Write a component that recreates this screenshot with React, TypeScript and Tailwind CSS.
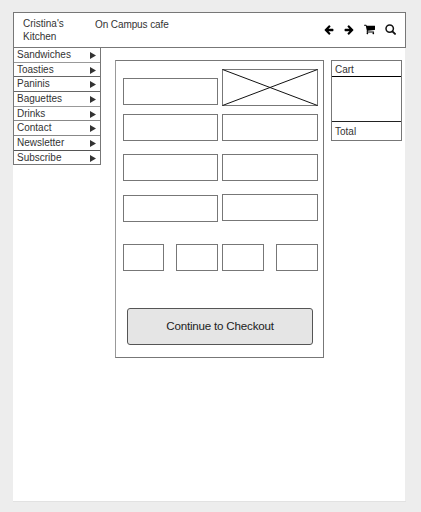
const menu = [
  { label: "Sandwiches", size: "h-[15px] border-[#999]" },
  { label: "Toasties", size: "h-[14px] border-[#666]" },
  { label: "Paninis", size: "h-[15px] border-[#666]" },
  { label: "Baguettes", size: "h-[15px] border-[#999]" },
  { label: "Drinks", size: "h-[14px] border-[#888]" },
  { label: "Contact", size: "h-[15px] border-[#888]" },
  { label: "Newsletter", size: "h-[15px] border-[#555]" },
  { label: "Subscribe", size: "h-[14px] border-[#777]" },
];

function Box({ className }: { className: string }) {
  return <div className={`border border-[#777] ${className}`} />;
}

function ArrowIcon({ className }: { className: string }) {
  return (
    <svg className={`h-[10px] w-[10px] ${className}`} viewBox="0 -128 1600 1664" fill="#000">
      <path d="M1536 640v128q0 53-32.5 90.5t-84.5 37.5h-704l293 294q38 36 38 90t-38 90l-75 76q-37 37-90 37-52 0-91-37l-651-652q-37-37-37-90 0-52 37-91l651-650q38-38 91-38 52 0 90 38l75 74q38 38 38 91t-38 91l-293 293h704q52 0 84.5 37.5t32.5 90.5z" />
    </svg>
  );
}

function CartIcon() {
  return (
    <svg className="mr-[10px] h-[11px] w-[11px]" viewBox="0 128 1664 1664" fill="#000">
      <path d="M640 1536q0 52-38 90t-90 38-90-38-38-90 38-90 90-38 90 38 38 90zm896 0q0 52-38 90t-90 38-90-38-38-90 38-90 90-38 90 38 38 90zm128-1088v512q0 24-16.5 42.5t-40.5 21.5l-1044 122q13 60 13 70 0 16-24 64h920q26 0 45 19t19 45-19 45-45 19h-1024q-26 0-45-19t-19-45q0-11 8-31.5t16-36 21.5-40 15.5-29.5l-177-823h-204q-26 0-45-19t-19-45 19-45 45-19h256q16 0 28.5 6.5t19.5 15.5 13 24.5 8 26 5.5 29.5 4.5 26h1201q26 0 45 19t19 45z" />
    </svg>
  );
}

function SearchIcon() {
  return (
    <svg className="h-[11px] w-[11px]" viewBox="0 0 11 11" fill="none" stroke="#111">
      <circle cx="4.7" cy="4.6" r="3.7" strokeWidth="1.5" />
      <path d="M7.4 7.3L10 9.9" strokeWidth="1.9" strokeLinecap="round" />
    </svg>
  );
}

export default function App() {
  return (
    <div className="h-[512px] w-[421px] overflow-hidden bg-[#ededed] pt-3 pl-[13px] font-['Liberation_Sans',Arial,sans-serif] text-[10px] text-[#333]">
      <div className="flex h-[490px] w-[393px] flex-col border-b border-[#e2e2e2] bg-white">
        <header className="flex h-9 shrink-0 border border-[#777]">
          <div className="mt-[4px] ml-[9px] w-[72px] leading-[13px]">
            Cristina&apos;s
            <br />
            Kitchen
          </div>
          <div className="mt-[5px] tracking-[-0.1px] leading-[13px]">On Campus cafe</div>
          <div className="mt-[11px] mr-[9px] ml-auto flex h-[11px] items-center">
            <ArrowIcon className="mr-[10px]" />
            <ArrowIcon className="mr-[10px] -scale-x-100" />
            <CartIcon />
            <SearchIcon />
          </div>
        </header>
        <div className="flex grow items-start border-r border-[#ededed]">
          <nav className="w-[88px] border-x border-[#777]">
            {menu.map((item) => (
              <div key={item.label} className={`flex items-center border-b pr-1 pl-[3px] leading-[14px] ${item.size}`}>
                <span>{item.label}</span>
                <svg className="mt-px ml-auto h-[7px] w-[6px]" viewBox="0 0 6 7">
                  <path d="M0 0L6 3.5L0 7Z" fill="#333" />
                </svg>
              </div>
            ))}
          </nav>
          <main className="mt-3 ml-[14px] h-[298px] w-[209px] border border-[#777] border-l-[#999] pl-[7px]">
            <div className="flex gap-1">
              <div className="flex w-[95px] flex-col">
                <Box className="mt-[17px] h-[27px]" />
                <Box className="mt-[9px] h-[27px]" />
                <Box className="mt-[13px] h-[27px]" />
                <Box className="mt-[14px] h-[27px]" />
              </div>
              <div className="flex w-[96px] flex-col">
                <svg className="mt-2 h-[37px] w-[96px]" viewBox="0 0 96 37" fill="none">
                  <rect x="0.5" y="0.5" width="95" height="36" stroke="#777" />
                  <path d="M0.5 0.5L95.5 36.5M0.5 36.5L95.5 0.5" stroke="#111" />
                </svg>
                <Box className="mt-2 h-[27px]" />
                <Box className="mt-[13px] h-[27px]" />
                <Box className="mt-[13px] h-[27px]" />
              </div>
            </div>
            <div className="mt-[22px] flex">
              <Box className="h-[27px] w-[41px]" />
              <Box className="ml-3 h-[27px] w-[42px]" />
              <Box className="ml-1 h-[27px] w-[42px]" />
              <Box className="ml-3 h-[27px] w-[42px]" />
            </div>
            <button className="mt-[37px] ml-1 flex h-[37px] w-[186px] items-center justify-center rounded-[3px] border border-[#555] bg-[#e5e5e5] pb-[2px] text-[11.6px] tracking-[-0.2px] text-[#222]">
              Continue to Checkout
            </button>
          </main>
          <aside className="mt-3 ml-[7px] h-[81px] w-[71px] border border-[#777]">
            <div className="h-4 border-b border-black pl-[3px] leading-[17px]">Cart</div>
            <div className="h-[45px] border-b border-[#222]" />
            <div className="pl-[3px] leading-[19px]">Total</div>
          </aside>
        </div>
      </div>
    </div>
  );
}
